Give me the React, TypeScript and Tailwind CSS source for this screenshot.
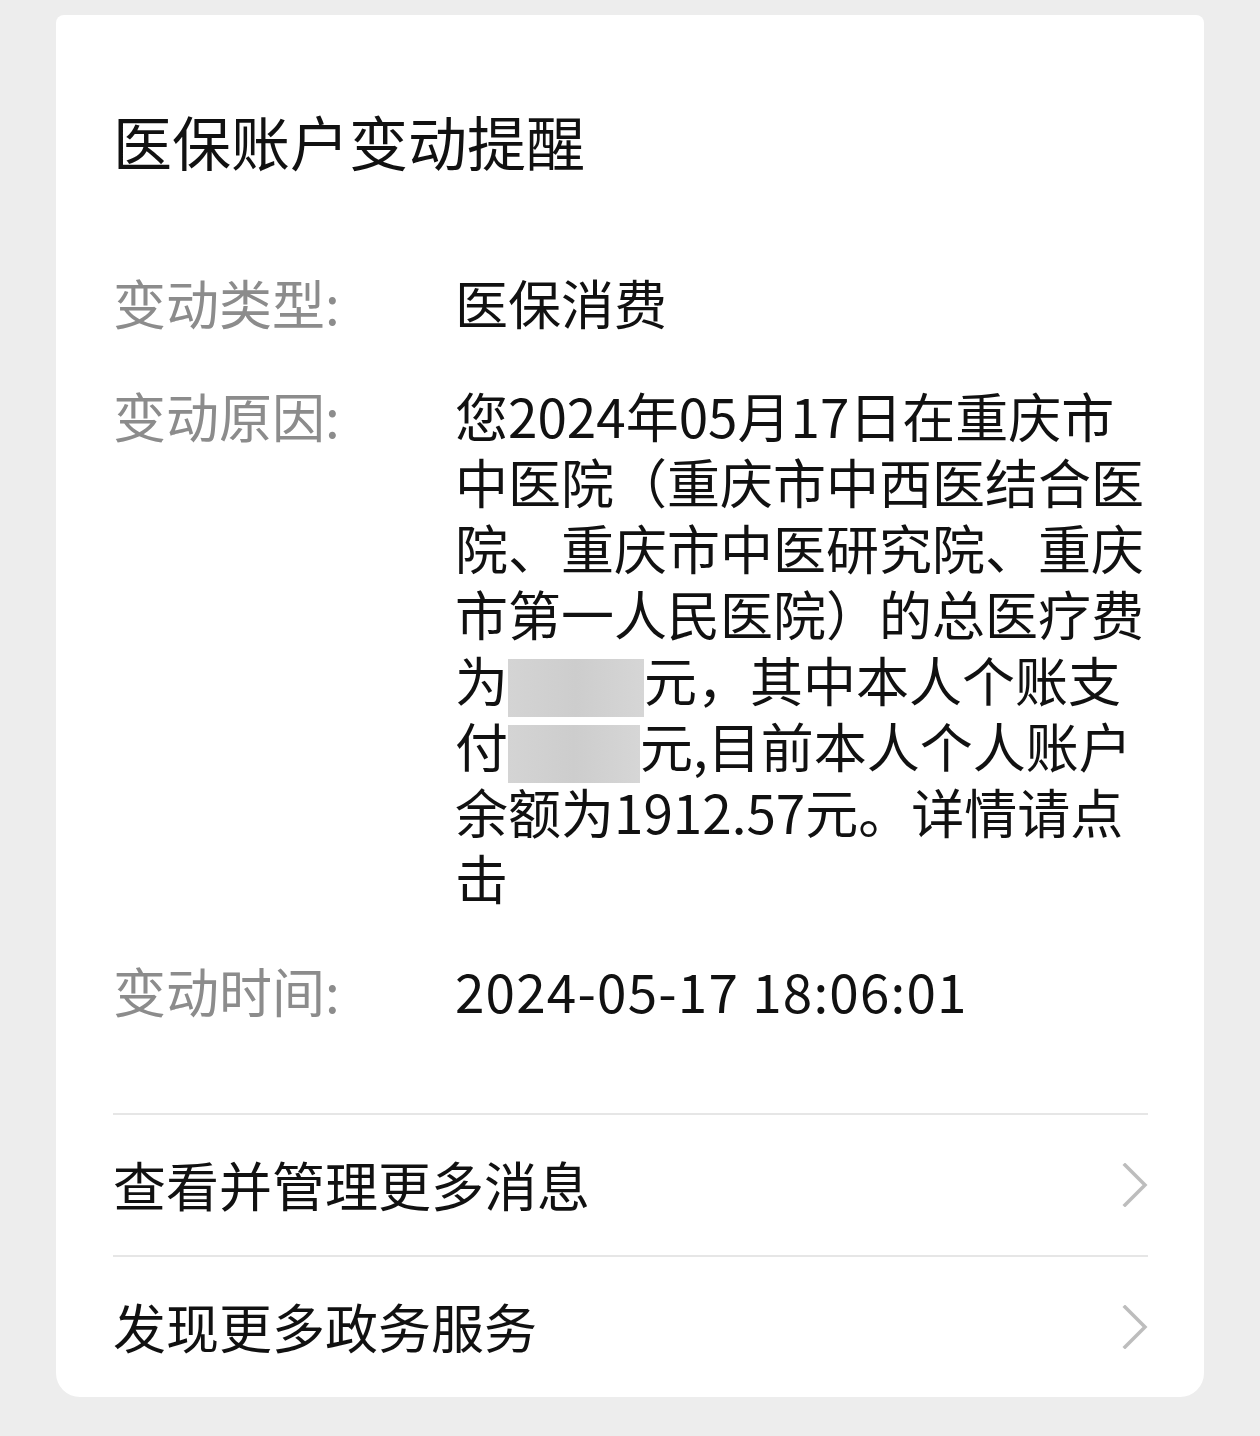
import React from 'react';

const font = { fontFamily: '"Noto Sans CJK SC", "Noto Sans", sans-serif' };

function Blur({ w }: { w: number }) {
  return (
    <span
      className="-my-[10px] inline-block h-[58px] bg-gradient-to-r from-[#d4d4d4] via-[#cdcdcd] to-[#d6d6d6] align-middle"
      style={{ width: w }}
    />
  );
}

function Chevron() {
  return (
    <svg width="26" height="44" viewBox="0 0 26 44" className="shrink-0">
      <path d="M3 2 L23 22 L3 42" fill="none" stroke="#bdbdbd" strokeWidth="3.5" strokeLinecap="square" />
    </svg>
  );
}

function Row({ label, children }: { label: string; children: React.ReactNode }) {
  return (
    <div className="flex text-[53px] leading-[66px]">
      <div className="w-[342px] shrink-0 text-[#8c8c8c]">{label}</div>
      <div className="flex-1 text-[#111]">{children}</div>
    </div>
  );
}

export default function App() {
  const reason = [
    '您2024年05月17日在重庆市',
    '中医院（重庆市中西医结合医',
    '院、重庆市中医研究院、重庆',
    '市第一人民医院）的总医疗费',
  ];

  return (
    <div className="min-h-[1436px] bg-[#ededed] px-[56px] pt-[15px]" style={font}>
      <div className="h-[1382px] rounded-t-[8px] rounded-b-[24px] bg-white pl-[57px] pr-[56px] pt-[86px]">
        <h1 className="text-[59px] leading-[80px] font-normal text-[#111]">医保账户变动提醒</h1>

        <div className="mt-[88px] flex flex-col gap-[47px]">
          <Row label="变动类型:">医保消费</Row>
          <Row label="变动原因:">
            {reason.map((l) => (
              <div key={l} className="whitespace-nowrap">{l}</div>
            ))}
            <div className="whitespace-nowrap">
              为<Blur w={136} />元，其中本人个账支
            </div>
            <div className="whitespace-nowrap">
              付<Blur w={132} />元,目前本人个人账户
            </div>
            <div className="whitespace-nowrap">余额为1912.57元。详情请点</div>
            <div className="whitespace-nowrap">击</div>
          </Row>
          <Row label="变动时间:">
            <span className="tracking-[1.2px]">2024-05-17 18:06:01</span>
          </Row>
        </div>

        <div className="mt-[90px]">
          <div className="flex h-[142px] items-center justify-between border-t-2 border-[#e6e6e6] text-[53px] text-[#111]">
            <span>查看并管理更多消息</span>
            <Chevron />
          </div>
          <div className="flex h-[142px] items-center justify-between border-t-2 border-[#e6e6e6] text-[53px] text-[#111]">
            <span>发现更多政务服务</span>
            <Chevron />
          </div>
        </div>
      </div>
    </div>
  );
}
